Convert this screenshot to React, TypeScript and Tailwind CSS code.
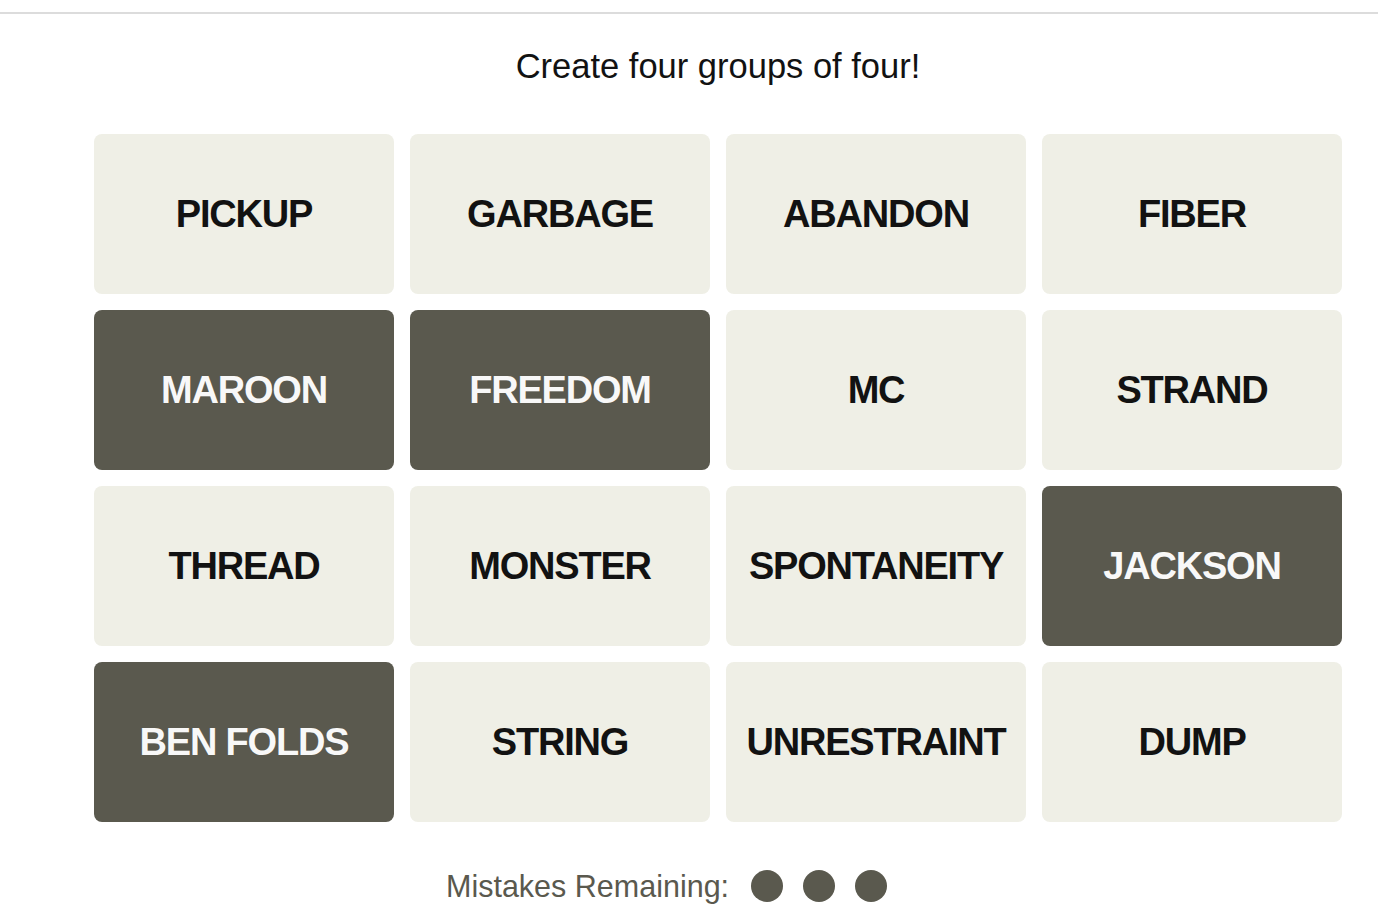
const words: { label: string; selected?: boolean }[] = [
  { label: 'PICKUP' },
  { label: 'GARBAGE' },
  { label: 'ABANDON' },
  { label: 'FIBER' },
  { label: 'MAROON', selected: true },
  { label: 'FREEDOM', selected: true },
  { label: 'MC' },
  { label: 'STRAND' },
  { label: 'THREAD' },
  { label: 'MONSTER' },
  { label: 'SPONTANEITY' },
  { label: 'JACKSON', selected: true },
  { label: 'BEN FOLDS', selected: true },
  { label: 'STRING' },
  { label: 'UNRESTRAINT' },
  { label: 'DUMP' },
];

export default function App() {
  return (
    <div
      className="min-h-[922px] bg-white"
      style={{ fontFamily: '"Liberation Sans", Arial, sans-serif' }}
    >
      {/* top divider */}
      <div className="h-3" />
      <div className="h-[2px] bg-[#dcdcdc]" />

      <div className="pl-[94px] w-[1342px]">
        {/* Instructions */}
        <p className="pt-[32px] text-center text-[34.5px] leading-[40px] text-[#121212]">
          Create four groups of four!
        </p>

        {/* Tiles */}
        <div className="mt-[48px] grid grid-cols-[repeat(4,300px)] gap-4">
          {words.map((w) => (
            <button
              key={w.label}
              className={`h-40 rounded-lg flex items-center justify-center text-[38px] font-bold tracking-[-1.2px] uppercase ${
                w.selected ? 'bg-[#5a594e] text-[#f8f8f8]' : 'bg-[#efefe6] text-[#121212]'
              }`}
            >
              {w.label}
            </button>
          ))}
        </div>

        {/* Mistakes */}
        <div className="mt-[48px] ml-[352px] flex items-center text-[#5a594e]">
          <span className="text-[30.5px] leading-8">Mistakes Remaining:</span>
          <div className="ml-[22px] flex gap-5">
            <span className="w-8 h-8 rounded-full bg-[#5a594e]" />
            <span className="w-8 h-8 rounded-full bg-[#5a594e]" />
            <span className="w-8 h-8 rounded-full bg-[#5a594e]" />
          </div>
        </div>
      </div>
    </div>
  );
}
